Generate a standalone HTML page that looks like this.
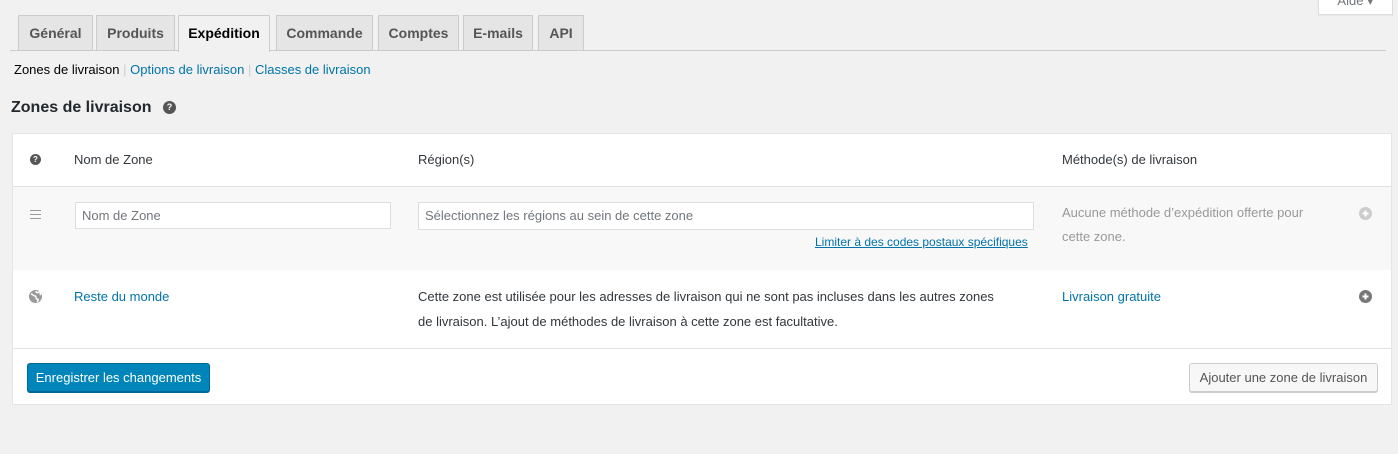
<!DOCTYPE html>
<html><head><meta charset="utf-8"><style>
body{margin:0;width:1398px;height:454px;background:#f1f1f1;font-family:"Liberation Sans",sans-serif;font-size:13px;color:#32373c;position:relative;overflow:hidden}
.a{position:absolute}
.tab{position:absolute;top:15px;height:34px;background:#e5e5e5;border:1px solid #ccc;border-bottom:none;font-size:14px;font-weight:bold;color:#555;text-align:center;line-height:34px}
.tab.on{background:#f1f1f1;color:#000;height:36px}
a{color:#0073aa;text-decoration:none}
.ic{position:absolute;width:12px;height:12px;border-radius:50%;color:#fff;font-size:9px;font-weight:bold;text-align:center;line-height:12px}
</style></head><body>
<div class="a" style="left:1318px;top:-10px;width:73px;height:23px;background:#fff;border:1px solid #ddd;box-shadow:0 1px 1px rgba(0,0,0,.05);font-size:13px;color:#72777c;text-align:center;line-height:20px">Aide ▾</div>
<div class="a" style="left:10px;top:50px;width:1376px;height:1px;background:#ccc"></div>
<div class="tab" style="left:18px;width:73px">Général</div>
<div class="tab" style="left:96px;width:77px">Produits</div>
<div class="tab on" style="left:178px;width:90px">Expédition</div>
<div class="tab" style="left:276px;width:95px">Commande</div>
<div class="tab" style="left:378px;width:79px">Comptes</div>
<div class="tab" style="left:463px;width:68px">E-mails</div>
<div class="tab" style="left:538px;width:44px">API</div>
<div class="a" style="left:14px;top:62px;color:#000">Zones de livraison <span style="color:#ccc">|</span> <a>Options de livraison</a> <span style="color:#ccc">|</span> <a>Classes de livraison</a></div>
<div class="a" style="left:11px;top:99px;font-size:16px;font-weight:bold;color:#23282d">Zones de livraison</div>
<div class="ic" style="left:163px;top:101px;width:13px;height:13px;background:#555;line-height:13px">?</div>

<div class="a" style="left:12px;top:133px;width:1380px;height:272px;background:#fff;border:1px solid #e5e5e5;box-sizing:border-box"></div>
<div class="a" style="left:13px;top:186px;width:1378px;height:1px;background:#e1e1e1"></div>
<div class="a" style="left:13px;top:187px;width:1378px;height:83px;background:#f8f8f8"></div>
<div class="a" style="left:13px;top:348px;width:1378px;height:1px;background:#e1e1e1"></div>

<div class="ic" style="left:30px;top:154px;width:11px;height:11px;background:#555;line-height:11px;font-size:8px">?</div>
<div class="a" style="left:74px;top:152px">Nom de Zone</div>
<div class="a" style="left:418px;top:152px">Région(s)</div>
<div class="a" style="left:1062px;top:152px">Méthode(s) de livraison</div>

<div class="a" style="left:30px;width:11px;height:1px;background:#999;box-shadow:0 4px 0 #999,0 8px 0 #999;top:210px"></div>
<div class="a" style="left:75px;top:202px;width:316px;height:27px;border:1px solid #ddd;background:#fff;box-sizing:border-box;padding-left:6px;line-height:25px;color:#72777c">Nom de Zone</div>
<div class="a" style="left:418px;top:202px;width:616px;height:28px;border:1px solid #ddd;background:#fff;box-sizing:border-box;padding-left:6px;line-height:26px;color:#72777c">Sélectionnez les régions au sein de cette zone</div>
<div class="a" style="left:815px;top:235px;font-size:12px"><a style="text-decoration:underline">Limiter à des codes postaux spécifiques</a></div>
<div class="a" style="left:1062px;top:201px;color:#999;line-height:24px;width:262px">Aucune méthode d’expédition offerte pour cette zone.</div>
<svg class="a" style="left:1359px;top:207px" width="13" height="13" viewBox="0 0 13 13"><circle cx="6.5" cy="6.5" r="6.5" fill="#ccc"/><path d="M3.5 6.5h6M6.5 3.5v6" stroke="#fff" stroke-width="2"/></svg>

<svg class="a" style="left:29px;top:290px" width="13" height="13" viewBox="0 0 13 13"><circle cx="6.5" cy="6.5" r="6.5" fill="#999"/><path d="M2 4c2 0 2 2 4 2s0 3 2 3 1 2 0 3M7 1c0 2 2 2 3 1s2 2 1 3" stroke="#fff" stroke-width="1.5" fill="none"/></svg>
<div class="a" style="left:74px;top:289px"><a>Reste du monde</a></div>
<div class="a" style="left:418px;top:284px;line-height:25px;width:588px">Cette zone est utilisée pour les adresses de livraison qui ne sont pas incluses dans les autres zones de livraison. L’ajout de méthodes de livraison à cette zone est facultative.</div>
<div class="a" style="left:1062px;top:289px"><a>Livraison gratuite</a></div>
<svg class="a" style="left:1359px;top:290px" width="13" height="13" viewBox="0 0 13 13"><circle cx="6.5" cy="6.5" r="6.5" fill="#777"/><path d="M3.5 6.5h6M6.5 3.5v6" stroke="#fff" stroke-width="2"/></svg>

<div class="a" style="left:27px;top:363px;width:183px;height:29px;background:#0085ba;border:1px solid #006799;border-radius:3px;box-sizing:border-box;color:#fff;text-align:center;line-height:27px;box-shadow:0 1px 0 #006799">Enregistrer les changements</div>
<div class="a" style="left:1189px;top:363px;width:189px;height:29px;background:#f7f7f7;border:1px solid #ccc;border-radius:3px;box-sizing:border-box;color:#555;text-align:center;line-height:27px;box-shadow:0 1px 0 #ccc">Ajouter une zone de livraison</div>
</body></html>
